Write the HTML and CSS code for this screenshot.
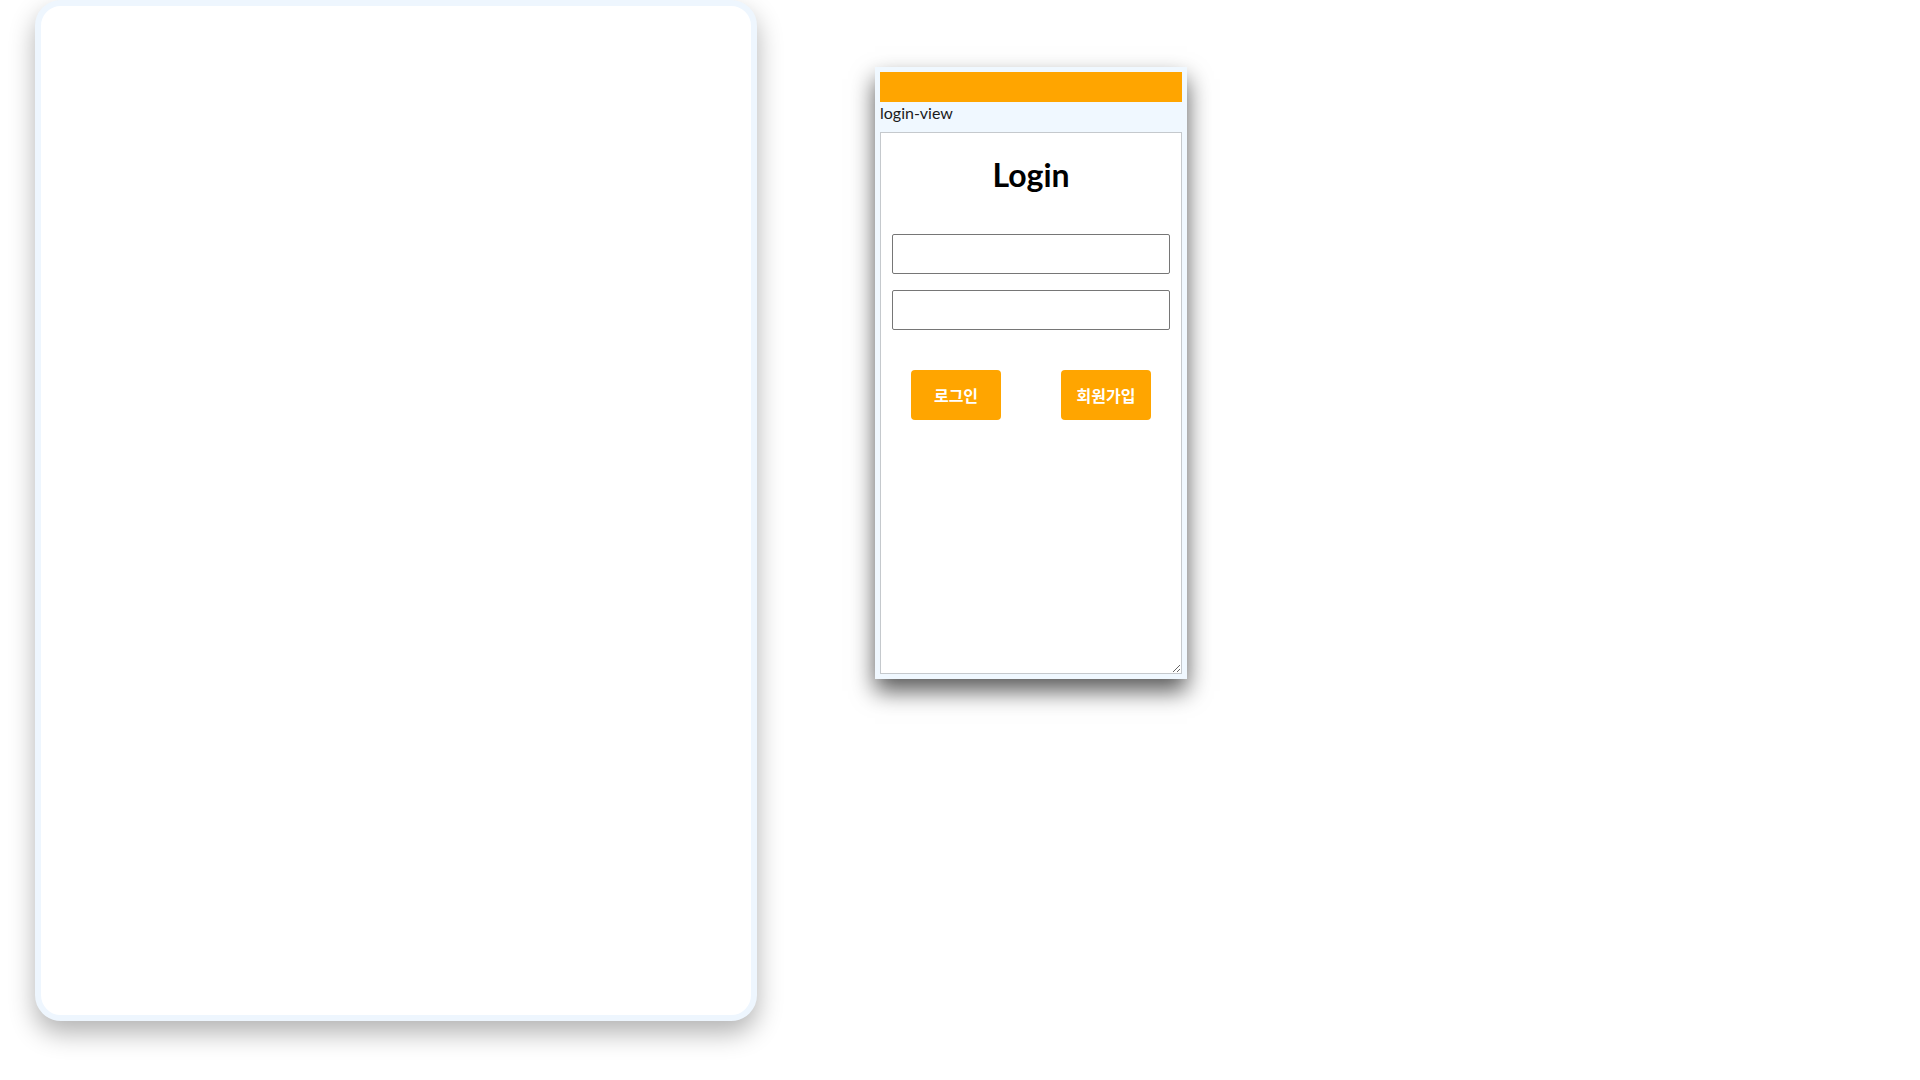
FILE: index.html
```html
<!DOCTYPE html>
<html lang="ko">
<head>
<meta charset="utf-8">
<title>login-view</title>
<link rel="stylesheet" href="styles.css">
</head>
<body>
<div class="stage">
  <div class="device"></div>
  <div class="window">
    <div class="window-bar"></div>
    <div class="window-label">login-view</div>
    <div class="window-view">
      <h1 class="login-title">Login</h1>
      <div class="fields">
        <input class="field" type="text">
        <input class="field" type="password">
      </div>
      <div class="actions">
        <button class="btn" type="button">로그인</button>
        <button class="btn" type="button">회원가입</button>
      </div>
    </div>
  </div>
</div>
</body>
</html>
```

FILE: styles.css
```css
html, body {
  margin: 0;
  padding: 0;
  background: #ffffff;
  font-family: Lato, "Noto Sans CJK KR", sans-serif;
}

body {
  min-height: 1080px;
}

.stage {
  display: flex;
  align-items: flex-start;
  padding-left: 35px;
  gap: 118px;
}

.device {
  box-sizing: border-box;
  width: 722px;
  height: 1021px;
  background: #ffffff;
  border: 6px solid #eef6fe;
  border-radius: 26px;
  box-shadow: 0 12px 26px rgba(0, 0, 0, 0.3);
}

.window {
  box-sizing: border-box;
  margin-top: 67px;
  width: 312px;
  padding: 5px;
  background: #f0f8ff;
  box-shadow: 0 12px 22px rgba(0, 0, 0, 0.65);
}

.window-bar {
  height: 30px;
  background: #ffa500;
}

.window-label {
  font-family: Lato, sans-serif;
  font-size: 16px;
  line-height: 21px;
  color: #1b1b1b;
  margin-bottom: 9px;
}

.window-view {
  box-sizing: border-box;
  width: 302px;
  height: 542px;
  background: #ffffff;
  border: 1px solid #c5c9cd;
  overflow: auto;
  resize: both;
}

.login-title {
  margin: 22px 0 39px;
  font-family: Lato, "Noto Sans CJK KR", sans-serif;
  font-size: 32px;
  line-height: 40px;
  font-weight: 700;
  text-align: center;
  color: #000000;
}

.fields {
  display: flex;
  flex-direction: column;
  align-items: center;
  gap: 16px;
}

.field {
  box-sizing: border-box;
  width: 278px;
  height: 40px;
  margin: 0;
  border: 1px solid #767676;
  border-radius: 2px;
  background: #ffffff;
  font-size: 16px;
  padding: 0 8px;
}

.actions {
  display: flex;
  justify-content: space-around;
  margin-top: 40px;
}

.btn {
  width: 90px;
  height: 50px;
  border: none;
  border-radius: 4px;
  background: #ffa500;
  color: #ffffff;
  font-family: "Noto Sans CJK KR", sans-serif;
  font-size: 16px;
  font-weight: 700;
  padding: 0;
}
```
